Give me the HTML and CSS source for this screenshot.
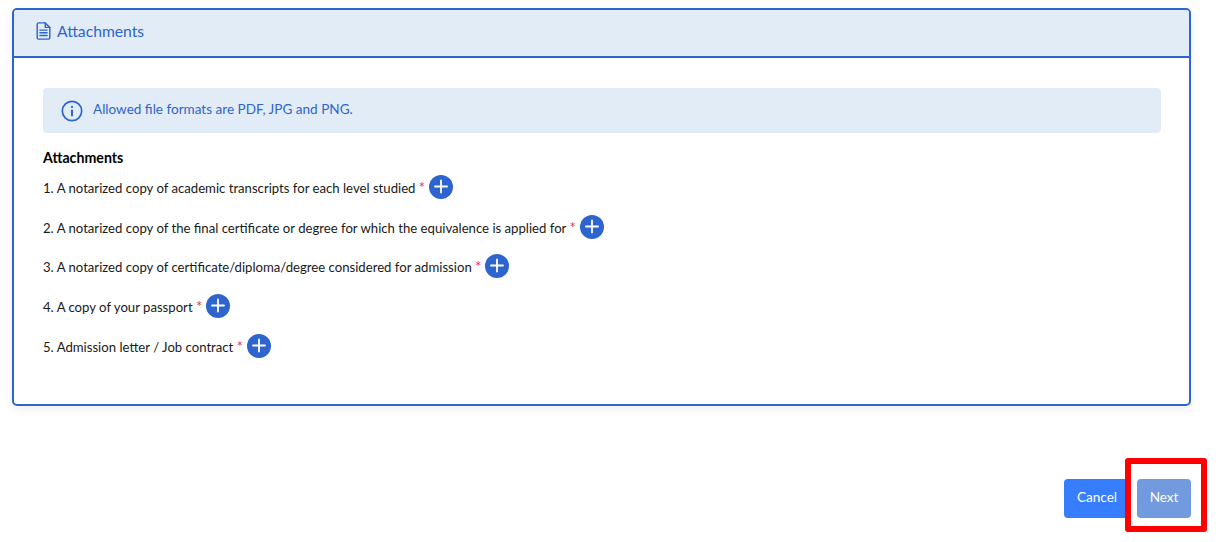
FILE: index.html
```html
<!DOCTYPE html>
<html lang="en">
<head>
<meta charset="utf-8">
<title>Attachments</title>
<link rel="stylesheet" href="styles.css">
</head>
<body>
<section class="card">
  <header class="card-head">
    <svg class="doc-icon" viewBox="0 0 16 20" width="15" height="18" fill="none" stroke="currentColor" stroke-width="1.600" stroke-linejoin="round" stroke-linecap="round"><path d="M2.5 1h7.500l5 5v11.500a1.500 1.500 0 0 1-1.500 1.500h-11a1.500 1.500 0 0 1-1.500-1.500v-15a1.500 1.500 0 0 1 1.500-1.500z"/><path d="M10 1v5h5M4 9h8M4 12h8M4 15h8"/></svg>
    <span>Attachments</span>
  </header>
  <div class="card-body">
    <div class="alert">
      <svg class="info-icon" viewBox="0 0 22 22" width="22" height="22" fill="none" stroke="currentColor" stroke-width="1.700" stroke-linecap="round"><circle cx="11" cy="11" r="9.700"/><path d="M11 10.500v5" stroke-width="2"/><path d="M11 6.800v.2" stroke-width="2.200"/></svg>
      <span>Allowed file formats are PDF, JPG and PNG.</span>
    </div>
    <h2 class="title">Attachments</h2>
    <ol class="items">
      <li class="item"><span>1. A notarized copy of academic transcripts for each level studied <span class="req">*</span></span><button class="add" aria-label="Add"><svg viewBox="0 0 24 24" width="24" height="24"><path d="M12 5.500v12M6 11.500h12" stroke="#fff" stroke-width="1.800" stroke-linecap="round"/></svg></button></li>
      <li class="item"><span>2. A notarized copy of the final certificate or degree for which the equivalence is applied for <span class="req">*</span></span><button class="add" aria-label="Add"><svg viewBox="0 0 24 24" width="24" height="24"><path d="M12 5.500v12M6 11.500h12" stroke="#fff" stroke-width="1.800" stroke-linecap="round"/></svg></button></li>
      <li class="item"><span>3. A notarized copy of certificate/diploma/degree considered for admission <span class="req">*</span></span><button class="add" aria-label="Add"><svg viewBox="0 0 24 24" width="24" height="24"><path d="M12 5.500v12M6 11.500h12" stroke="#fff" stroke-width="1.800" stroke-linecap="round"/></svg></button></li>
      <li class="item"><span>4. A copy of your passport <span class="req">*</span></span><button class="add" aria-label="Add"><svg viewBox="0 0 24 24" width="24" height="24"><path d="M12 5.500v12M6 11.500h12" stroke="#fff" stroke-width="1.800" stroke-linecap="round"/></svg></button></li>
      <li class="item"><span>5. Admission letter / Job contract <span class="req">*</span></span><button class="add" aria-label="Add"><svg viewBox="0 0 24 24" width="24" height="24"><path d="M12 5.500v12M6 11.500h12" stroke="#fff" stroke-width="1.800" stroke-linecap="round"/></svg></button></li>
    </ol>
  </div>
</section>
<footer class="actions">
  <button class="btn btn-cancel">Cancel</button>
  <button class="btn btn-next">Next</button>
  <div class="highlight"></div>
</footer>
</body>
</html>
```

FILE: styles.css
```css
* { box-sizing: border-box; }
html, body { margin: 0; padding: 0; }
body {
  width: 1218px;
  height: 542px;
  overflow: hidden;
  background: #fff;
  font-family: "Lato", "Noto Sans", sans-serif;
  font-size: 13.550px;
  color: #1a1a1a;
  padding: 8px 27px 0 12px;
}
.card {
  height: 398px;
  border: 2px solid #2d64cd;
  border-radius: 5px;
  box-shadow: 0 3px 10px rgba(0, 0, 0, 0.08);
  overflow: hidden;
}
.card-head {
  height: 48px;
  display: flex;
  align-items: center;
  gap: 6px;
  padding: 0 0 4px 22px;
  background: #e2ecf7;
  border-bottom: 2px solid #2d64cd;
  color: #2d64cd;
  font-size: 15.700px;
}
.doc-icon { flex: none; }
.card-body { padding: 30px 28px 0 29px; }
.alert {
  height: 45px;
  display: flex;
  align-items: center;
  gap: 10px;
  padding: 0 0 3px 18px;
  background: #e2ecf7;
  border-radius: 4px;
  color: #2d64cd;
}
.info-icon { margin-top: 3px; }
.title {
  margin: 17px 0 0;
  font-size: 14.200px;
  font-weight: 700;
  line-height: 16px;
  color: #000;
}
.items { list-style: none; margin: 8.900px 0 0; padding: 0; }
.item {
  height: 39.750px;
  display: flex;
  align-items: flex-start;
  gap: 4px;
  font-size: 13.150px;
  line-height: 24px;
}
.item > span { padding-top: 1px; }
.req { color: #e8344e; font-size: 15px; line-height: 1; }
.add {
  width: 24px;
  height: 24px;
  padding: 0;
  border: 0;
  border-radius: 50%;
  background: #2d64cd;
}
.add svg { display: block; }
.actions {
  position: relative;
  display: flex;
  justify-content: flex-end;
  gap: 7px;
  margin-top: 73px;
}
.btn {
  height: 39px;
  padding: 0 0 3px;
  border: 0;
  border-radius: 4px;
  color: #fff;
  font-family: inherit;
  font-size: 13.500px;
}
.btn-cancel { width: 66px; background: #377dff; }
.btn-next { width: 54px; background: #729ade; }
.highlight {
  position: absolute;
  left: 1113px;
  top: -21px;
  width: 82px;
  height: 74px;
  border: 6px solid #ff0000;
  border-radius: 3px;
}
```
